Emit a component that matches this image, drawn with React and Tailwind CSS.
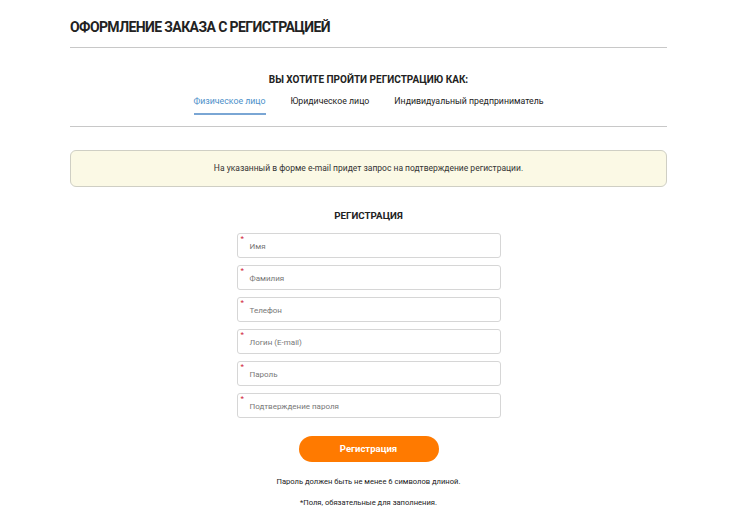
const fields = ["Имя", "Фамилия", "Телефон", "Логин (E-mail)", "Пароль", "Подтверждение пароля"];

const tabs = [
  { label: "Физическое лицо", active: true },
  { label: "Юридическое лицо", active: false },
  { label: "Индивидуальный предприниматель", active: false },
];

export default function App() {
  return (
    <div className="bg-white min-h-screen text-[#222]" style={{ fontFamily: "Roboto, Arial, sans-serif" }}>
      <div className="w-[597px] ml-[70px] pt-[17px]">
        <h1 className="text-[14px] font-bold uppercase leading-5 pb-[10px] border-b border-[#c8c8c8] tracking-[-0.6px]">
          Оформление заказа с регистрацией
        </h1>

        <div className="border-b border-[#c8c8c8] pt-[24px]">
          <h2 className="text-center text-[10px] font-bold uppercase leading-4">
            Вы хотите пройти регистрацию как:
          </h2>
          <div className="flex justify-center gap-[25px] mt-[7px] pb-[11px] text-[8.75px] leading-3">
            {tabs.map((t) => (
              <div
                key={t.label}
                className={
                  t.active
                    ? "text-[#4c8fc9] border-b-2 border-[#7aa6d4] pb-[6px]"
                    : "text-[#222] pb-[6px]"
                }
              >
                {t.label}
              </div>
            ))}
          </div>
        </div>

        <div className="mt-[23px] h-[37px] bg-[#fbf9e5] border border-[#cfcfc4] rounded-md flex items-center justify-center text-[8.5px] text-[#333]">
          На указанный в форме e-mail придет запрос на подтверждение регистрации.
        </div>

        <h3 className="text-center text-[9.75px] font-bold uppercase mt-[21px] leading-4">Регистрация</h3>

        <div className="w-[264px] mx-auto mt-[9px] flex flex-col gap-[7px]">
          {fields.map((f) => (
            <div
              key={f}
              className="relative h-[25px] border border-[#d6d6d6] rounded-[3px] flex items-center pl-[12px] text-[8px] text-[#777]"
            >
              <span className="absolute left-[3px] top-[1px] text-[#d0233a] text-[8px] leading-none">*</span>
              <span className="mt-[2px]">{f}</span>
            </div>
          ))}
        </div>

        <div className="flex justify-center mt-[18px]">
          <button className="w-[140px] h-[26px] rounded-full bg-[#ff7a00] text-white text-[9.5px] font-bold">
            Регистрация
          </button>
        </div>

        <p className="text-center text-[7.6px] mt-[14px] leading-3 text-[#222]">Пароль должен быть не менее 6 символов длиной.</p>
        <p className="text-center text-[7.6px] mt-[9px] leading-3 text-[#222]">*Поля, обязательные для заполнения.</p>
      </div>
    </div>
  );
}
